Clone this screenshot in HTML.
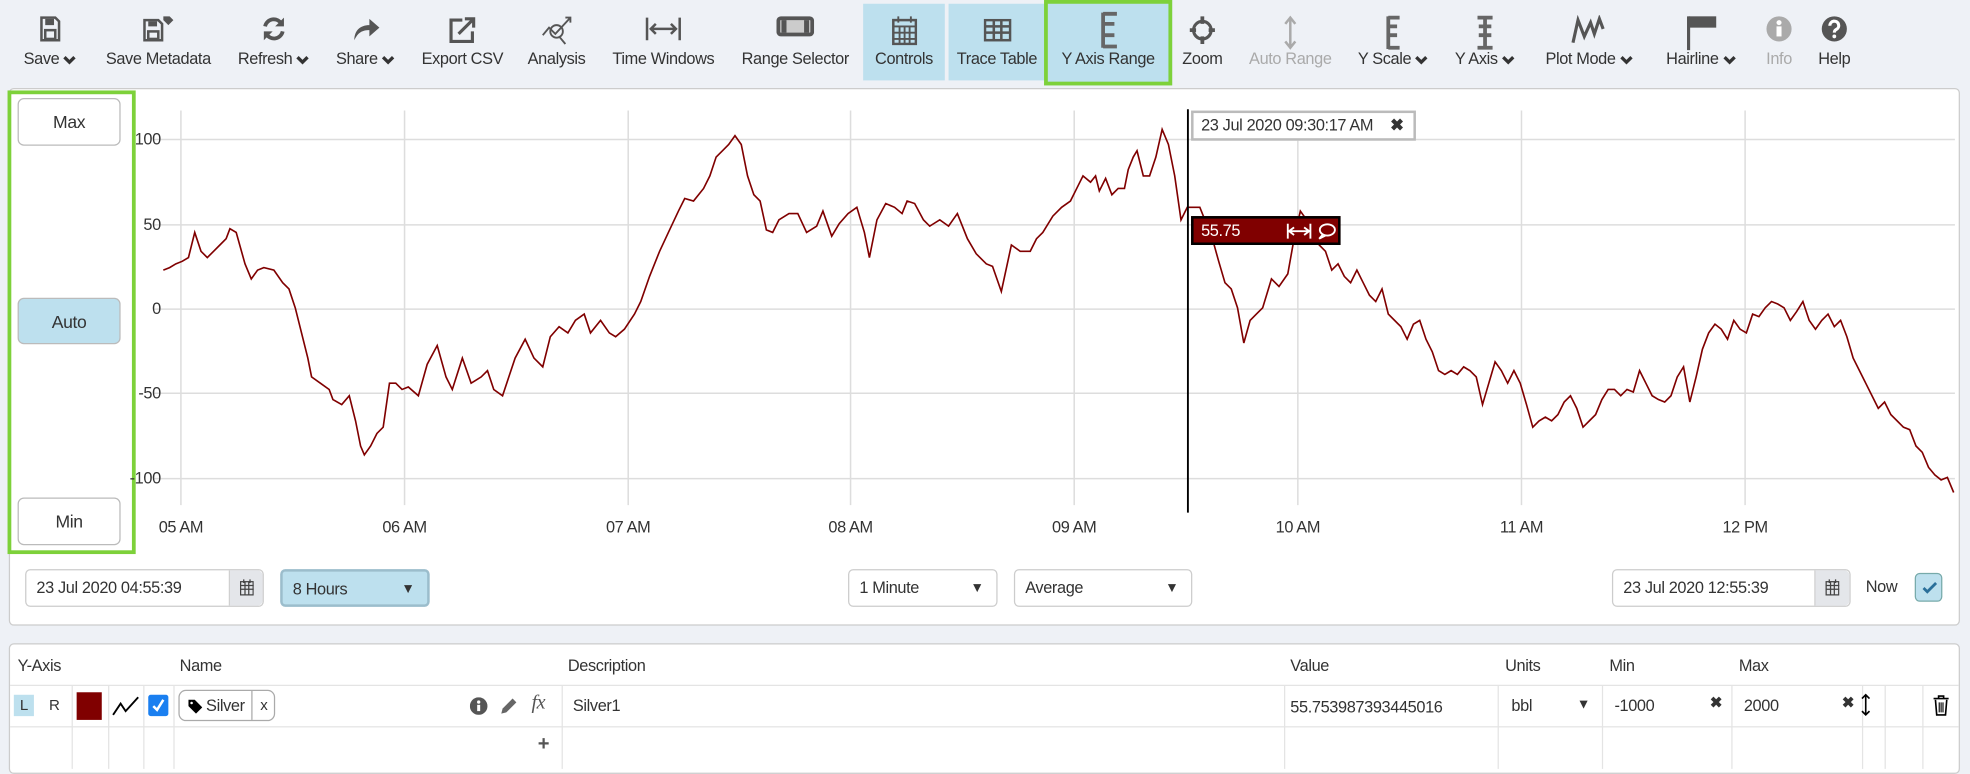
<!DOCTYPE html>
<html><head><meta charset="utf-8">
<style>
*{box-sizing:border-box;margin:0;padding:0}
html,body{width:1970px;height:769px;overflow:hidden;background:#eef1f6}
#w{position:absolute;left:0;top:0;width:1568px;height:612px;transform:scale(1.25638);transform-origin:0 0;font-family:"Liberation Sans",sans-serif;font-size:13px;color:#333;letter-spacing:-0.3px}
.a{position:absolute}
.tb{position:absolute;top:0;height:68px;text-align:center;white-space:nowrap}
.tb .ic{position:absolute;top:12px;left:50%;transform:translateX(-50%)}
.tb .lb{position:absolute;top:39px;left:50%;transform:translateX(-50%);font-size:13px;color:#333}
.g .lb{color:#aaa}
.on{background:#bde0ee}
.chev{display:inline-block;width:11px;height:8px;margin-left:3px;vertical-align:-1px;background:none}
.panel{position:absolute;background:#fff;border:1px solid #ccc;border-radius:4px}
.btn{position:absolute;border:1px solid #bbb;border-radius:5px;background:#fff;text-align:center;font-size:14px;line-height:36px}
.inp{position:absolute;border:1px solid #ccc;border-radius:4px;background:#fff;height:30px;line-height:28px;padding-left:8px;font-size:13px}
.yl{position:absolute;left:96px;width:32px;text-align:right;font-size:13px;color:#333}
.xl{position:absolute;top:412px;font-size:13px;color:#333;transform:translateX(-50%)}
.th{position:absolute;top:522px;font-size:13px}
.vl{position:absolute;width:1px;background:#e4e4e4;top:546px;height:66px}
</style></head><body><div id="w">
<svg width="0" height="0" style="position:absolute"><defs><symbol id="cv" viewBox="0 0 11 8"><path d="M1.5 1.5l4 4 4-4" stroke="#333" stroke-width="2.6" fill="none"/></symbol></defs></svg>

<!-- toolbar -->
<div class="tb" style="left:14px;width:52px"><svg class="ic" width="18" height="22" viewBox="0 0 18 22"><path d="M2 2h11l3 3v15H2z" fill="none" stroke="#555" stroke-width="2"/><rect x="5" y="3" width="7" height="5" fill="#555"/><rect x="5" y="12" width="8" height="7" fill="none" stroke="#555" stroke-width="2"/></svg><div class="lb">Save<svg class="chev"><use href="#cv"/></svg></div></div>
<div class="tb" style="left:84px;width:84px"><svg class="ic" width="26" height="22" viewBox="0 0 26 22"><path d="M2 4h11l3 3v13H2z" fill="none" stroke="#555" stroke-width="2"/><rect x="5" y="5" width="7" height="4" fill="#555"/><rect x="5" y="13" width="8" height="6" fill="none" stroke="#555" stroke-width="2"/><path d="M17 1h5l3 3-4 4-4-4z" fill="#555"/></svg><div class="lb">Save Metadata</div></div>
<div class="tb" style="left:188px;width:60px"><svg class="ic" width="22" height="22" viewBox="0 0 22 22"><path d="M4 9a7 7 0 0 1 13-2M18 13a7 7 0 0 1-13 2" fill="none" stroke="#555" stroke-width="3"/><path d="M19 2v7h-7zM3 20v-7h7z" fill="#555"/></svg><div class="lb">Refresh<svg class="chev"><use href="#cv"/></svg></div></div>
<div class="tb" style="left:264px;width:54px"><svg class="ic" width="24" height="22" viewBox="0 0 24 22"><path d="M3 20c0-8 5-12 12-12V3l8 7-8 7v-5c-6 0-9 2-12 8z" fill="#555"/></svg><div class="lb">Share<svg class="chev"><use href="#cv"/></svg></div></div>
<div class="tb" style="left:335px;width:66px"><svg class="ic" width="24" height="24" viewBox="0 0 24 24"><path d="M12 4H3v17h17v-8" fill="none" stroke="#555" stroke-width="2.5"/><path d="M9 15L20 4M14 3h7v7" fill="none" stroke="#555" stroke-width="2.5"/></svg><div class="lb">Export CSV</div></div>
<div class="tb" style="left:417px;width:52px"><svg class="ic" width="26" height="24" viewBox="0 0 26 24"><circle cx="13" cy="13" r="5" fill="none" stroke="#555" stroke-width="1.5"/><path d="M2 16l5-6 5 5 12-13M15 17l5 6M20 2h4v4" fill="none" stroke="#555" stroke-width="1.5"/></svg><div class="lb">Analysis</div></div>
<div class="tb" style="left:484px;width:88px"><svg class="ic" width="30" height="22" viewBox="0 0 30 22"><path d="M2 2v18M28 2v18M5 11h20M9 7l-4 4 4 4M21 7l4 4-4 4" fill="none" stroke="#555" stroke-width="2"/></svg><div class="lb">Time Windows</div></div>
<div class="tb" style="left:588px;width:90px"><svg class="ic" width="30" height="18" viewBox="0 0 30 18"><rect x="1.5" y="2.5" width="27" height="13" rx="2" fill="#ccc" stroke="#555" stroke-width="3"/><rect x="4" y="4" width="4" height="10" fill="#555"/><rect x="22" y="4" width="4" height="10" fill="#555"/></svg><div class="lb">Range Selector</div></div>
<div class="tb on" style="left:687px;width:65px;top:3px;height:61px"><svg class="ic" style="top:9px" width="20" height="24" viewBox="0 0 20 24"><rect x="1" y="4" width="18" height="19" fill="none" stroke="#555" stroke-width="2"/><path d="M1 9h18M1 14h18M1 19h18M6 9v14M10 9v14M14 9v14M5 1v5M15 1v5" stroke="#555" stroke-width="1.5"/></svg><div class="lb" style="top:36px">Controls</div></div>
<div class="tb on" style="left:755px;width:77px;top:3px;height:61px"><svg class="ic" style="top:12px" width="22" height="18" viewBox="0 0 22 18"><rect x="1" y="1" width="20" height="16" fill="none" stroke="#555" stroke-width="2"/><path d="M1 6h20M1 11h20M8 1v16M14 1v16" stroke="#555" stroke-width="2"/></svg><div class="lb" style="top:36px">Trace Table</div></div>
<div class="tb on" style="left:831px;width:102px;top:0;height:68px;border:3px solid #7dd13a"><svg class="ic" style="top:6px" width="16" height="30" viewBox="0 0 16 30"><path d="M4 1v28M4 2h11M4 10h9M4 19h9M4 28h11" stroke="#666" stroke-width="3" fill="none"/></svg><div class="lb" style="top:36px">Y Axis Range</div></div>
<div class="tb" style="left:936px;width:42px"><svg class="ic" width="22" height="24" viewBox="0 0 22 24"><circle cx="11" cy="12" r="7" fill="none" stroke="#555" stroke-width="2.5"/><path d="M11 1v6M11 17v6M1 12h5M16 12h5" stroke="#555" stroke-width="3"/></svg><div class="lb">Zoom</div></div>
<div class="tb g" style="left:990px;width:74px"><svg class="ic" width="12" height="28" viewBox="0 0 12 28"><path d="M6 3v22M2 7l4-5 4 5M2 21l4 5 4-5" stroke="#aaa" stroke-width="2" fill="none"/></svg><div class="lb">Auto Range</div></div>
<div class="tb" style="left:1078px;width:62px"><svg class="ic" width="16" height="28" viewBox="0 0 16 28"><path d="M4 1v26M4 2h9M4 9h7M4 16h7M4 26h9" stroke="#666" stroke-width="3" fill="none"/></svg><div class="lb">Y Scale<svg class="chev"><use href="#cv"/></svg></div></div>
<div class="tb" style="left:1154px;width:56px"><svg class="ic" width="16" height="28" viewBox="0 0 16 28"><path d="M8 1v26M2 2h12M3 9h10M3 16h10M2 26h12" stroke="#666" stroke-width="3" fill="none"/></svg><div class="lb">Y Axis<svg class="chev"><use href="#cv"/></svg></div></div>
<div class="tb" style="left:1225px;width:80px"><svg class="ic" width="30" height="24" viewBox="0 0 30 24"><path d="M2 22L6 4l5 13 5-11 3 9 4-12 3 8" stroke="#555" stroke-width="2.5" fill="none"/></svg><div class="lb">Plot Mode<svg class="chev"><use href="#cv"/></svg></div></div>
<div class="tb" style="left:1322px;width:64px"><svg class="ic" width="26" height="28" viewBox="0 0 26 28"><path d="M3 1v27" stroke="#555" stroke-width="2.5"/><rect x="3" y="1" width="22" height="9" fill="#555"/></svg><div class="lb">Hairline<svg class="chev"><use href="#cv"/></svg></div></div>
<div class="tb g" style="left:1402px;width:28px"><svg class="ic" width="22" height="22" viewBox="0 0 22 22"><circle cx="11" cy="11" r="10" fill="#aaa"/><rect x="9" y="9" width="4" height="8" fill="#fff"/><circle cx="11" cy="6" r="2" fill="#fff"/></svg><div class="lb">Info</div></div>
<div class="tb" style="left:1444px;width:32px"><svg class="ic" width="22" height="22" viewBox="0 0 22 22"><circle cx="11" cy="11" r="10" fill="#555"/><path d="M7.5 8.5a3.5 3.5 0 1 1 5 3c-1 .6-1.5 1-1.5 2.5" stroke="#fff" stroke-width="2.5" fill="none"/><circle cx="11" cy="17" r="1.5" fill="#fff"/></svg><div class="lb">Help</div></div>

<!-- chart panel -->
<div class="panel" style="left:7px;top:70px;width:1553px;height:428px"></div>
<div class="a" style="left:6px;top:72px;width:102px;height:369px;border:3px solid #7dd13a"></div>
<div class="btn" style="left:14px;top:78px;width:82px;height:38px">Max</div>
<div class="btn" style="left:14px;top:237px;width:82px;height:37px;background:#bde0ee">Auto</div>
<div class="btn" style="left:14px;top:396px;width:82px;height:38px">Min</div>

<svg class="a" style="left:0;top:0" width="1568" height="440">
<g stroke="#ddd" stroke-width="1.2">
<line x1="122" y1="111" x2="1556" y2="111"/><line x1="122" y1="179" x2="1556" y2="179"/><line x1="122" y1="246" x2="1556" y2="246"/><line x1="122" y1="313" x2="1556" y2="313"/><line x1="122" y1="381" x2="1556" y2="381"/>
<line x1="144" y1="88" x2="144" y2="402"/><line x1="322" y1="88" x2="322" y2="402"/><line x1="500" y1="88" x2="500" y2="402"/><line x1="677" y1="88" x2="677" y2="402"/><line x1="855" y1="88" x2="855" y2="402"/><line x1="1033" y1="88" x2="1033" y2="402"/><line x1="1211" y1="88" x2="1211" y2="402"/><line x1="1389" y1="88" x2="1389" y2="402"/>
</g>
<polyline fill="none" stroke="#800000" stroke-width="1.3" points="130,215 135,213 140,210 145,208 150,205 155,185 160,200 165,205 170,200 175,195 180,190 183,182 188,185 195,210 200,222 205,215 210,213 218,215 225,225 230,230 235,245 240,265 245,285 248,300 255,305 262,310 265,318 272,322 278,315 283,335 287,355 290,362 295,355 300,345 305,340 310,305 315,305 320,310 325,308 333,315 340,290 348,275 355,300 360,310 368,285 375,305 383,300 388,295 393,310 400,315 405,300 410,285 418,270 425,285 432,292 438,268 445,260 452,265 458,255 465,250 470,265 478,255 485,265 490,268 497,262 505,250 510,240 517,220 525,200 532,185 540,168 545,158 552,160 560,150 565,140 570,125 575,120 580,115 585,108 590,115 595,140 600,155 605,160 610,183 615,185 620,175 628,170 635,170 642,185 650,180 655,168 662,188 668,178 675,170 682,165 688,185 692,205 698,175 705,162 712,165 718,170 722,160 728,162 735,175 740,180 748,175 755,180 762,170 770,190 777,202 785,210 790,212 797,232 805,195 812,200 820,200 825,190 830,185 838,172 845,165 852,160 858,148 862,140 868,145 872,140 875,152 880,142 885,155 890,150 895,150 898,135 902,125 905,120 910,140 915,140 920,125 925,103 930,115 935,140 940,175 945,165 955,165 965,190 970,208 975,225 980,230 985,245 990,273 995,255 1000,250 1005,245 1012,222 1018,228 1025,218 1030,190 1035,168 1040,175 1045,188 1050,195 1055,200 1060,215 1065,210 1070,220 1075,225 1080,215 1085,225 1090,235 1095,240 1100,230 1105,250 1110,255 1115,260 1120,270 1125,258 1130,255 1135,270 1140,280 1145,295 1150,298 1155,295 1160,298 1165,292 1170,295 1175,300 1180,322 1185,305 1190,288 1195,295 1200,305 1205,295 1210,305 1215,322 1220,340 1225,335 1230,332 1235,335 1240,330 1245,320 1250,315 1255,325 1260,340 1265,335 1270,330 1275,318 1280,310 1285,310 1290,315 1295,310 1300,312 1305,295 1310,305 1315,315 1320,318 1325,320 1330,315 1335,300 1340,292 1345,320 1350,300 1355,278 1360,265 1365,258 1370,262 1375,270 1380,255 1385,262 1390,265 1395,250 1400,252 1405,245 1410,240 1415,242 1420,245 1425,255 1430,248 1435,240 1440,255 1445,262 1450,255 1455,250 1460,260 1465,255 1470,268 1475,285 1480,295 1485,305 1490,315 1495,325 1500,320 1505,330 1510,335 1515,340 1520,342 1525,355 1530,360 1535,372 1540,378 1545,382 1550,380 1555,392"/>
<line x1="945.5" y1="87" x2="945.5" y2="408" stroke="#000" stroke-width="1.5"/>
</svg>
<div class="yl" style="top:103px">100</div><div class="yl" style="top:171px">50</div><div class="yl" style="top:238px">0</div><div class="yl" style="top:305px">-50</div><div class="yl" style="top:373px">-100</div>
<div class="xl" style="left:144px">05 AM</div><div class="xl" style="left:322px">06 AM</div><div class="xl" style="left:500px">07 AM</div><div class="xl" style="left:677px">08 AM</div><div class="xl" style="left:855px">09 AM</div><div class="xl" style="left:1033px">10 AM</div><div class="xl" style="left:1211px">11 AM</div><div class="xl" style="left:1389px">12 PM</div>

<div class="a" style="left:948px;top:88px;width:179px;height:24px;border:2px solid #bbb;background:#fff;font-size:13px;line-height:20px;padding-left:6px">23 Jul 2020 09:30:17 AM<span style="position:absolute;right:8px;font-weight:bold">✖</span></div>
<div class="a" style="left:948px;top:172px;width:119px;height:23px;border:2px solid #000;background:#800000;color:#fff;font-size:13px;line-height:19px;padding-left:6px">55.75
<svg class="a" style="left:74px;top:4px" width="20" height="12" viewBox="0 0 20 12"><path d="M1 0v12M19 0v12M2 6h16M6 3L2 6l4 3M14 3l4 3-4 3" stroke="#fff" stroke-width="1.5" fill="none"/></svg>
<svg class="a" style="left:98px;top:3px" width="16" height="14" viewBox="0 0 16 14"><ellipse cx="8.5" cy="6" rx="6" ry="4.5" fill="none" stroke="#fff" stroke-width="1.5"/><path d="M5 9.5L2 13l5-2.5" fill="none" stroke="#fff" stroke-width="1.5"/></svg></div>

<!-- bottom controls -->
<div class="inp" style="left:20px;top:453px;width:190px">23 Jul 2020 04:55:39</div>
<div class="a" style="left:182px;top:454px;width:27px;height:28px;background:#e4e6ea;border-left:1px solid #ccc;border-radius:0 4px 4px 0"><svg class="a" style="left:8px;top:7px" width="11" height="13" viewBox="0 0 11 13"><rect x="0.5" y="2" width="10" height="10.5" fill="none" stroke="#444"/><path d="M0 5h11M0 8h11M4 2v11M7 2v11M3 0v3M8 0v3" stroke="#444"/></svg></div>
<div class="inp" style="left:223px;top:453px;width:119px;background:#bde0ee;border-color:#9bbdcc;border-width:2px">8 Hours<span style="position:absolute;right:10px;font-size:11px">▼</span></div>
<div class="inp" style="left:675px;top:453px;width:119px">1 Minute<span style="position:absolute;right:10px;font-size:11px">▼</span></div>
<div class="inp" style="left:807px;top:453px;width:142px">Average<span style="position:absolute;right:10px;font-size:11px">▼</span></div>
<div class="inp" style="left:1283px;top:453px;width:190px">23 Jul 2020 12:55:39</div>
<div class="a" style="left:1444px;top:454px;width:28px;height:28px;background:#e4e6ea;border-left:1px solid #ccc;border-radius:0 4px 4px 0"><svg class="a" style="left:8px;top:7px" width="11" height="13" viewBox="0 0 11 13"><rect x="0.5" y="2" width="10" height="10.5" fill="none" stroke="#444"/><path d="M0 5h11M0 8h11M4 2v11M7 2v11M3 0v3M8 0v3" stroke="#444"/></svg></div>
<div class="a" style="left:1485px;top:459px">Now</div>
<div class="a" style="left:1524px;top:456px;width:22px;height:23px;border:1px solid #7aa;border-radius:4px;background:#bde0ee"><svg class="a" style="left:5px;top:6px" width="12" height="10" viewBox="0 0 12 10"><path d="M1 5l3 3 7-7" stroke="#2a6f9a" stroke-width="2.2" fill="none"/></svg></div>

<!-- table panel -->
<div class="panel" style="left:7px;top:512px;width:1553px;height:104px"></div>
<div class="th" style="left:14px">Y-Axis</div><div class="th" style="left:143px">Name</div><div class="th" style="left:452px">Description</div><div class="th" style="left:1027px">Value</div><div class="th" style="left:1198px">Units</div><div class="th" style="left:1281px">Min</div><div class="th" style="left:1384px">Max</div>
<div class="a" style="left:8px;top:545px;width:1551px;height:1px;background:#e4e4e4"></div>
<div class="a" style="left:8px;top:578px;width:1551px;height:1px;background:#e4e4e4"></div>
<div class="vl" style="left:57px"></div><div class="vl" style="left:86px"></div><div class="vl" style="left:114px"></div><div class="vl" style="left:138px"></div><div class="vl" style="left:447px"></div><div class="vl" style="left:1022px"></div><div class="vl" style="left:1192px"></div><div class="vl" style="left:1275px"></div><div class="vl" style="left:1378px"></div><div class="vl" style="left:1482px"></div><div class="vl" style="left:1500px"></div><div class="vl" style="left:1530px"></div>
<div class="a" style="left:11px;top:553px;width:16px;height:17px;background:#bde0ee;text-align:center;line-height:17px;font-size:12px">L</div>
<div class="a" style="left:39px;top:553px;font-size:12px;line-height:17px">R</div>
<div class="a" style="left:61px;top:551px;width:20px;height:22px;background:#800000"></div>
<svg class="a" style="left:89px;top:554px" width="22" height="16" viewBox="0 0 22 16"><path d="M1 15L7 6l4 6 10-11" stroke="#000" stroke-width="1.5" fill="none"/></svg>
<div class="a" style="left:118px;top:553px;width:16px;height:17px;background:#1a7ff0;border-radius:2px"><svg class="a" style="left:3px;top:3px" width="10" height="11" viewBox="0 0 10 11"><path d="M1 6l3 3 5-8" stroke="#fff" stroke-width="2" fill="none"/></svg></div>
<div class="a" style="left:142px;top:549px;width:77px;height:25px;border:1px solid #aaa;border-radius:6px;background:#fff;line-height:23px;font-size:13px"><svg class="a" style="left:6px;top:6px" width="12" height="12" viewBox="0 0 12 12"><path d="M1 1h5l6 6-5 5-6-6z" fill="#000"/><circle cx="3.5" cy="3.5" r="1" fill="#fff"/></svg><span style="position:absolute;left:21px">Silver</span><span style="position:absolute;left:57px;top:0;height:23px;border-left:1px solid #aaa;width:19px;text-align:center;font-size:12px">x</span></div>
<svg class="a" style="left:374px;top:555px" width="14" height="14" viewBox="0 0 14 14"><circle cx="7" cy="7" r="7" fill="#555"/><rect x="5.8" y="6" width="2.4" height="5" fill="#fff"/><circle cx="7" cy="3.8" r="1.3" fill="#fff"/></svg>
<svg class="a" style="left:397px;top:554px" width="16" height="16" viewBox="0 0 16 16"><path d="M2 14l1-4 8-8 3 3-8 8z" fill="#666"/></svg>
<div class="a" style="left:423px;top:551px;font-family:'Liberation Serif',serif;font-style:italic;font-size:16px;color:#555">fx</div>
<div class="a" style="left:428px;top:584px;font-size:16px;font-weight:bold;color:#555">+</div>
<div class="a" style="left:456px;top:554px">Silver1</div>
<div class="a" style="left:1027px;top:555px">55.753987393445016</div>
<div class="a" style="left:1203px;top:554px">bbl</div><div class="a" style="left:1255px;top:555px;font-size:11px">▼</div>
<div class="a" style="left:1285px;top:554px">-1000</div><div class="a" style="left:1361px;top:552px;font-weight:bold;font-size:12px">✖</div>
<div class="a" style="left:1388px;top:554px">2000</div><div class="a" style="left:1466px;top:552px;font-weight:bold;font-size:12px">✖</div>
<svg class="a" style="left:1481px;top:552px" width="8" height="18" viewBox="0 0 8 18"><path d="M4 1v16M1 4l3-3 3 3M1 14l3 3 3-3" stroke="#000" stroke-width="1.3" fill="none"/></svg>
<svg class="a" style="left:1538px;top:553px" width="14" height="17" viewBox="0 0 14 17"><path d="M1 3h12M5 3V1h4v2M2.5 4l1 12h7l1-12" stroke="#000" stroke-width="1.3" fill="none"/><path d="M5.5 6v8M7 6v8M8.5 6v8" stroke="#000" stroke-width="0.9"/></svg>
</div></body></html>
